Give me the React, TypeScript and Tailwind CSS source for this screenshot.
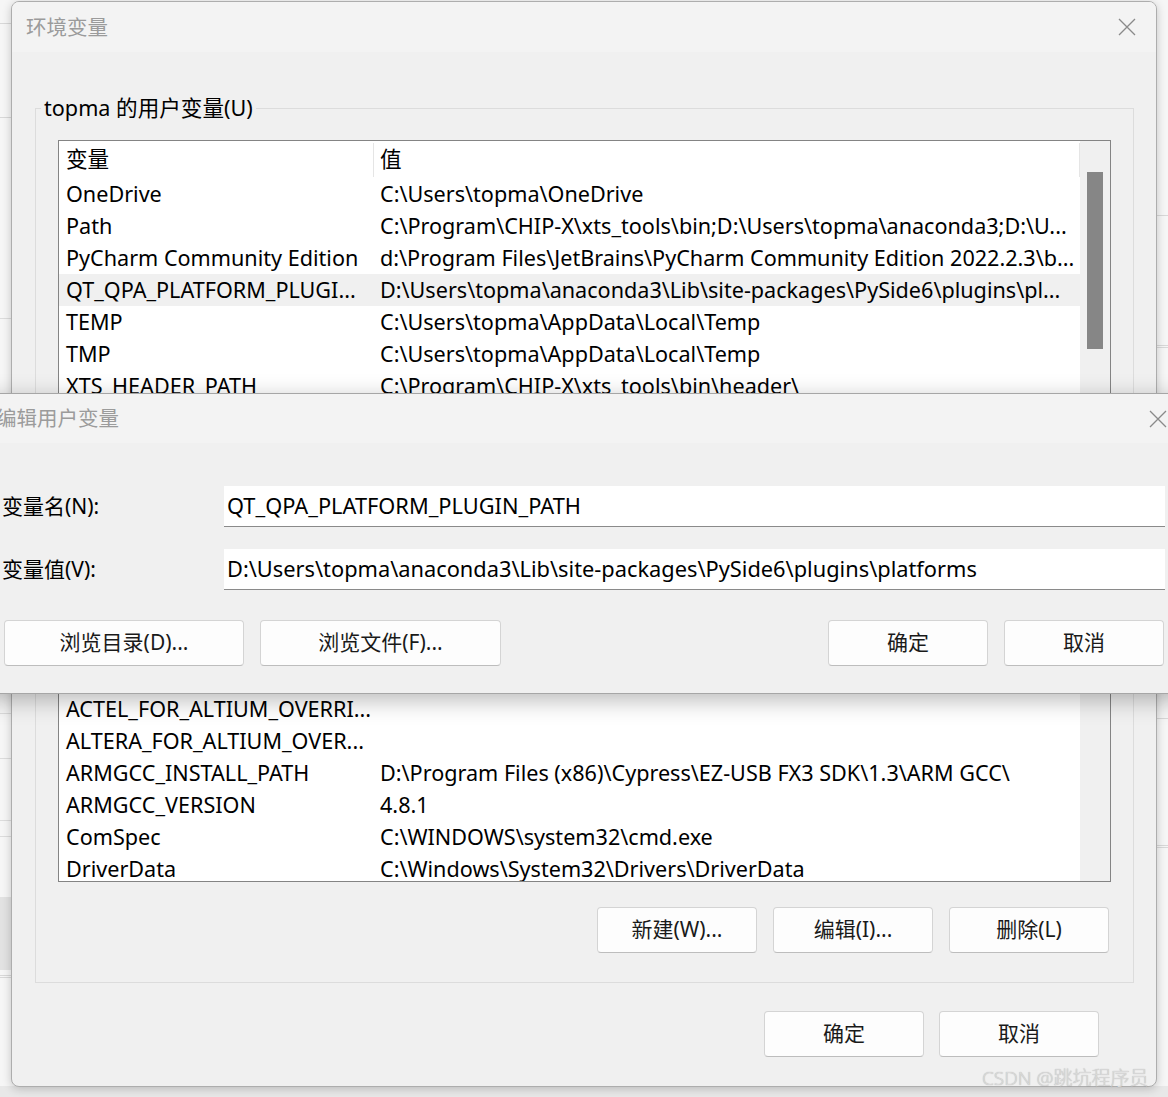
import React from 'react';
import { clsx } from 'clsx';

const font = 'font-["Noto_Sans","Noto_Sans_CJK_SC",sans-serif]';

type RowData = { name: string; value?: string; active?: boolean };

const topRows: RowData[] = [
  { name: 'OneDrive', value: 'C:\\Users\\topma\\OneDrive' },
  { name: 'Path', value: 'C:\\Program\\CHIP-X\\xts_tools\\bin;D:\\Users\\topma\\anaconda3;D:\\U...' },
  { name: 'PyCharm Community Edition', value: 'd:\\Program Files\\JetBrains\\PyCharm Community Edition 2022.2.3\\b...' },
  { name: 'QT_QPA_PLATFORM_PLUGI...', value: 'D:\\Users\\topma\\anaconda3\\Lib\\site-packages\\PySide6\\plugins\\pl...', active: true },
  { name: 'TEMP', value: 'C:\\Users\\topma\\AppData\\Local\\Temp' },
  { name: 'TMP', value: 'C:\\Users\\topma\\AppData\\Local\\Temp' },
  { name: 'XTS_HEADER_PATH', value: 'C:\\Program\\CHIP-X\\xts_tools\\bin\\header\\' },
];

const sysRows: RowData[] = [
  { name: 'ACTEL_FOR_ALTIUM_OVERRI...' },
  { name: 'ALTERA_FOR_ALTIUM_OVER...' },
  { name: 'ARMGCC_INSTALL_PATH', value: 'D:\\Program Files (x86)\\Cypress\\EZ-USB FX3 SDK\\1.3\\ARM GCC\\' },
  { name: 'ARMGCC_VERSION', value: '4.8.1' },
  { name: 'ComSpec', value: 'C:\\WINDOWS\\system32\\cmd.exe' },
  { name: 'DriverData', value: 'C:\\Windows\\System32\\Drivers\\DriverData' },
];

const Row = ({ name, value, active }: RowData) => (
  <div className={clsx('flex h-8 shrink-0 items-center', active && 'bg-[#f0f0f0]')}>
    <div className="w-[315px] shrink-0 overflow-hidden whitespace-nowrap pl-[7px]">{name}</div>
    <div className="overflow-hidden whitespace-nowrap pl-[6px]">{value}</div>
  </div>
);

const Button = ({ label, w = 'w-[160px]' }: { label: string; w?: string }) => (
  <button
    className={clsx(
      'h-[46px] rounded-[4px] border border-[#d4d4d4] border-b-[#bdbdbd] bg-[#fdfdfd] text-[21px] text-[#1a1a1a]',
      w
    )}
  >
    {label}
  </button>
);

const CloseIcon = () => (
  <svg width="18" height="18" viewBox="0 0 18 18" className="text-[#8a8a8a]">
    <path d="M1 1 L17 17 M17 1 L1 17" stroke="currentColor" strokeWidth="1.3" fill="none" />
  </svg>
);

export default function App() {
  return (
    <div className={clsx('relative h-[1097px] w-[1168px] overflow-hidden bg-[#f6f6f6] text-[21.6px] text-black', font)}>
      {/* desktop behind */}
      <div className="absolute left-0 top-[23px] h-px w-[12px] bg-[#d8d8d8]" />
      <div className="absolute left-0 top-[117px] h-px w-[12px] bg-[#d8d8d8]" />
      <div className="absolute left-0 top-[318px] h-px w-[12px] bg-[#dcdcdc]" />
      <div className="absolute left-0 top-[713px] h-px w-[12px] bg-[#dcdcdc]" />
      <div className="absolute left-0 top-[758px] h-px w-[12px] bg-[#dcdcdc]" />
      <div className="absolute left-0 top-[820px] h-[17px] w-[12px] border-y border-[#dcdcdc]" />
      <div className="absolute left-0 top-[897px] h-[73px] w-[12px] bg-[#e2e2e2]" />
      <div className="absolute left-0 top-[975px] h-[3px] w-[12px] border-y border-[#d8d8d8]" />
      <div className="absolute left-0 top-[1086px] h-[11px] w-[1168px] bg-[#e8e8e8]" />
      <div className="absolute right-0 top-[215px] h-px w-[12px] bg-[#d8d8d8]" />
      <div className="absolute right-0 top-[345px] h-[3px] w-[12px] border-y border-[#d8d8d8]" />
      <div className="absolute right-0 top-[718px] h-px w-[12px] bg-[#d8d8d8]" />
      <div className="absolute right-0 top-[845px] h-[3px] w-[12px] border-y border-[#d8d8d8]" />

      {/* 环境变量 window */}
      <div className="absolute left-[11px] top-[1px] flex h-[1086px] w-[1146px] flex-col overflow-hidden rounded-lg border border-[#adadad] bg-[#f0f0f0] shadow-[0_2px_10px_rgba(0,0,0,0.2)]">
        <div className="flex h-[50px] shrink-0 items-center justify-between bg-[#f3f3f3] pl-[14px] pr-[20px]">
          <span className="text-[20.5px] text-[#9b9b9b]">环境变量</span>
          <CloseIcon />
        </div>

        <fieldset className="ml-[23px] mr-[22px] mt-[42px] border border-[#dcdcdc] px-[22px] pb-[29px]">
          <legend className="-ml-[17px] px-[3px] leading-[28px]">topma 的用户变量(U)</legend>

          <div className="mt-[18px] flex h-[742px] border border-[#848484] bg-white">
            <div className="flex min-w-0 flex-1 flex-col overflow-hidden">
              <div className="flex h-[37px] shrink-0 items-center">
                <div className="flex h-[34px] w-[315px] shrink-0 items-center border-r border-[#e5e5e5] pl-[7px]">变量</div>
                <div className="flex h-[34px] flex-1 items-center border-r border-[#e5e5e5] pl-[6px]">值</div>
              </div>
              {topRows.map((r) => (
                <Row key={r.name} {...r} />
              ))}
              <div className="flex-1" />
              <div className="mb-[-4px] flex flex-col">
                {sysRows.map((r) => (
                  <Row key={r.name} {...r} />
                ))}
              </div>
            </div>
            <div className="w-[30px] shrink-0 bg-[#f0f0f0] px-[7px] pt-[31px]">
              <div className="h-[177px] bg-[#868686]" />
            </div>
          </div>

          <div className="mr-[2px] mt-[25px] flex justify-end gap-[16px]">
            <Button label="新建(W)..." />
            <Button label="编辑(I)..." />
            <Button label="删除(L)" />
          </div>
        </fieldset>

        <div className="mr-[57px] mt-[28px] flex justify-end gap-[15px]">
          <Button label="确定" />
          <Button label="取消" />
        </div>
      </div>

      {/* 编辑用户变量 dialog */}
      <div className="absolute left-[-19px] top-[393px] flex h-[301px] w-[1207px] flex-col border border-[#a6a6a6] bg-[#f0f0f0] shadow-[0_6px_22px_rgba(0,0,0,0.28)]">
        <div className="flex h-[49px] shrink-0 items-center justify-between bg-[#f3f3f3] pl-[14px] pr-[20px]">
          <span className="text-[20.5px] text-[#9b9b9b]">编辑用户变量</span>
          <CloseIcon />
        </div>

        <div className="mt-[43px] flex items-center pl-[20px] pr-[22px]">
          <label className="w-[222px] shrink-0 text-[21px]">变量名(N):</label>
          <div className="flex h-[41px] flex-1 items-center border-b border-[#8a8a8a] bg-white pl-[3px] text-[21.8px]">
            QT_QPA_PLATFORM_PLUGIN_PATH
          </div>
        </div>

        <div className="mt-[22px] flex items-center pl-[20px] pr-[22px]">
          <label className="w-[222px] shrink-0 text-[21px]">变量值(V):</label>
          <div className="flex h-[41px] flex-1 items-center border-b border-[#8a8a8a] bg-white pl-[3px] text-[21.8px]">
            D:\Users\topma\anaconda3\Lib\site-packages\PySide6\plugins\platforms
          </div>
        </div>

        <div className="mt-[30px] flex items-center gap-[16px] pl-[22px] pr-[23px]">
          <Button label="浏览目录(D)..." w="w-[240px]" />
          <Button label="浏览文件(F)..." w="w-[241px]" />
          <div className="flex-1" />
          <Button label="确定" />
          <Button label="取消" />
        </div>
      </div>

      {/* watermark */}
      <div className="absolute left-[982px] top-[1065px] text-[19px] font-light leading-[26px] text-[#dadada] [text-shadow:0_0_1px_rgba(0,0,0,0.3)]">
        CSDN @跳坑程序员
      </div>
    </div>
  );
}
